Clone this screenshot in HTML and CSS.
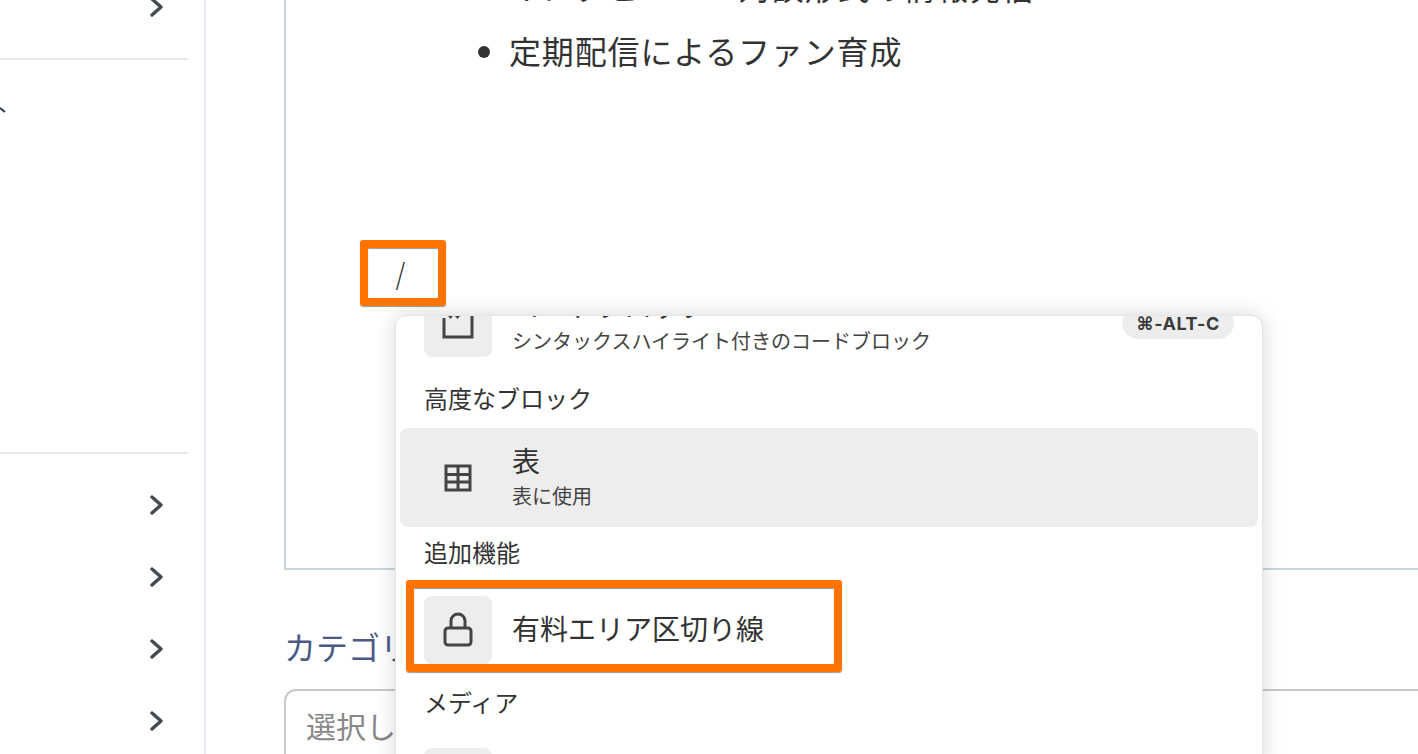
FILE: index.html
```html
<!DOCTYPE html>
<html lang="ja">
<head>
    <meta charset="UTF-8">
    <title>記事エディタ</title>
    <link rel="stylesheet" href="styles.css">
</head>
<body>
    <aside class="sidebar">
        <div class="side-row side-row-first">
            <svg class="chevron" viewBox="0 0 14 20"><path d="M2 2l9 8-9 8"/></svg>
        </div>
        <div class="side-section">
            <svg class="side-mark" viewBox="0 0 6 6"><path d="M0 1l5 4"/></svg>
        </div>
        <div class="side-row">
            <svg class="chevron" viewBox="0 0 14 20"><path d="M2 2l9 8-9 8"/></svg>
        </div>
        <div class="side-row">
            <svg class="chevron" viewBox="0 0 14 20"><path d="M2 2l9 8-9 8"/></svg>
        </div>
        <div class="side-row">
            <svg class="chevron" viewBox="0 0 14 20"><path d="M2 2l9 8-9 8"/></svg>
        </div>
        <div class="side-row">
            <svg class="chevron" viewBox="0 0 14 20"><path d="M2 2l9 8-9 8"/></svg>
        </div>
    </aside>

    <main class="main">
        <div class="editor">
            <ul class="editor-list">
                <li>インタビュー・対談形式の情報発信</li>
                <li>定期配信によるファン育成</li>
            </ul>
            <p class="editor-line">/</p>
        </div>
        <div class="field-label">カテゴリー</div>
        <div class="select">選択してください</div>
    </main>

    <div class="block-menu">
        <div class="menu-scroll">
            <div class="menu-item menu-item-code">
                <span class="menu-icon">
                    <svg viewBox="0 0 32 40"><path d="M2 15v19h28V8"/><path class="icon-fill" d="M6 13h5l-2.500 3zM13 13h5l-2.500 3z"/></svg>
                </span>
                <div class="menu-text">
                    <div class="menu-title">コードブロック</div>
                    <div class="menu-sub">シンタックスハイライト付きのコードブロック</div>
                </div>
                <span class="shortcut">⌘-ALT-C</span>
            </div>
            <div class="menu-heading menu-heading-tight">高度なブロック</div>
            <div class="menu-item menu-item-active">
                <span class="menu-icon">
                    <svg viewBox="0 0 28 28"><path d="M2 2h24v24H2zM2 10.500h24M2 18h24M14 2v24"/></svg>
                </span>
                <div class="menu-text">
                    <div class="menu-title">表</div>
                    <div class="menu-sub">表に使用</div>
                </div>
            </div>
            <div class="menu-heading">追加機能</div>
            <div class="menu-item menu-item-single">
                <span class="menu-icon">
                    <svg class="icon-lock" viewBox="0 0 30 36"><path d="M8 16V9a7 7 0 0 1 14 0v7M5 16h20a3 3 0 0 1 3 3v11a3 3 0 0 1-3 3H5a3 3 0 0 1-3-3V19a3 3 0 0 1 3-3z"/></svg>
                </span>
                <div class="menu-text">
                    <div class="menu-title">有料エリア区切り線</div>
                </div>
            </div>
            <div class="menu-heading menu-heading-tight">メディア</div>
            <div class="menu-item menu-item-single">
                <span class="menu-icon"></span>
                <div class="menu-text">
                    <div class="menu-title">画像</div>
                </div>
            </div>
        </div>
    </div>

    <div class="callout callout-slash"></div>
    <div class="callout callout-paid"></div>
</body>
</html>
```

FILE: styles.css
```css
* {
    margin: 0;
    padding: 0;
    box-sizing: border-box;
}

body {
    font-family: "Noto Sans CJK JP", "Noto Sans", sans-serif;
    background: white;
    color: #333;
    width: 1418px;
    height: 754px;
    display: flex;
    overflow: hidden;
    position: relative;
}

/* サイドバー */
.sidebar {
    width: 206px;
    flex-shrink: 0;
    border-right: 2px solid #e2e8f0;
    padding-right: 16px;
}

.side-row {
    height: 72px;
    display: flex;
    align-items: center;
    justify-content: flex-end;
    padding-right: 24px;
}

.side-row-first {
    margin-top: -29px;
    margin-bottom: 15px;
}

.side-section {
    height: 396px;
    margin-bottom: 15px;
    border-top: 2px solid #e2e8f0;
    border-bottom: 2px solid #e2e8f0;
    padding-top: 47px;
}

.side-mark {
    display: block;
    width: 6px;
    height: 6px;
    fill: none;
    stroke: #2d3748;
    stroke-width: 2;
}

.chevron {
    width: 14px;
    height: 20px;
    fill: none;
    stroke: #434a54;
    stroke-width: 3.4;
    stroke-linecap: round;
    stroke-linejoin: round;
}

/* エディタ */
.main {
    flex: 1;
    min-width: 0;
    padding-left: 78px;
}

.editor {
    height: 570px;
    border-left: 2px solid #cbd5e0;
    border-bottom: 2px solid #cbd5e0;
    overflow: hidden;
}

.editor-list {
    margin-top: -46px;
    padding-left: 223px;
    font-size: 32px;
    letter-spacing: 0.85px;
    line-height: 64px;
}

.editor-line {
    margin-top: 161px;
    padding-left: 109px;
    font-family: Inter, sans-serif;
    font-size: 32px;
    font-weight: 200;
    line-height: 64px;
}

.field-label {
    margin-top: 52px;
    font-size: 32px;
    line-height: 48px;
    color: #4a5a85;
    white-space: nowrap;
}

.select {
    margin-top: 19px;
    height: 120px;
    border: 2px solid #c8c8c8;
    border-right: none;
    border-radius: 12px 0 0 12px;
    padding: 11px 0 0 20px;
    font-size: 30px;
    line-height: 46px;
    color: #888;
}

/* ブロック選択メニュー */
.block-menu {
    position: absolute;
    left: 395px;
    top: 315px;
    width: 868px;
    height: 460px;
    background: white;
    border: 1px solid #e4e4e4;
    border-radius: 12px;
    box-shadow: 0 0 20px rgba(0, 0, 0, 0.16);
    overflow: hidden;
}

.menu-scroll {
    margin-top: -43px;
    padding: 0 4px;
}

.menu-item {
    display: flex;
    align-items: center;
    gap: 20px;
    padding: 16px 24px 15px;
    border-radius: 8px;
}

.menu-item-code {
    margin-bottom: 3px;
}

.menu-item-active {
    background: #ededed;
}

.menu-icon {
    width: 68px;
    height: 68px;
    flex-shrink: 0;
    display: flex;
    align-items: center;
    justify-content: center;
    background: #ededed;
    border-radius: 8px;
}

.menu-icon svg {
    width: 28px;
    height: 28px;
    fill: none;
    stroke: #444;
    stroke-width: 3;
}

.menu-icon .icon-lock {
    width: 30px;
    height: 36px;
}

.menu-item-code .menu-icon svg {
    width: 32px;
    height: 40px;
}

.menu-icon .icon-fill {
    fill: #444;
    stroke: none;
}

.menu-text {
    flex: 1;
}

.menu-title {
    font-size: 28px;
    line-height: 32px;
    color: #333;
}

.menu-item-single .menu-title {
    margin-bottom: 4px;
}

.menu-sub {
    font-size: 20px;
    line-height: 40px;
    margin-bottom: -4px;
    color: #444;
}

.menu-heading {
    height: 53px;
    padding: 0 24px 4px;
    display: flex;
    align-items: center;
    font-size: 24px;
    color: #333;
}

.menu-heading-tight {
    padding-bottom: 9px;
}

.shortcut {
    height: 32px;
    width: 112px;
    flex-shrink: 0;
    display: flex;
    align-items: center;
    justify-content: center;
    background: #ededed;
    border-radius: 16px;
    font-family: Inter, sans-serif;
    font-size: 18px;
    font-weight: 700;
    letter-spacing: 0.5px;
    color: #3c3c3c;
}

/* 注釈の枠 */
.callout {
    position: absolute;
    border: 8px solid #ff7300;
    border-radius: 3px;
    box-shadow: 0 1px 1px rgba(0, 0, 0, 0.4), inset 0 1px 1px rgba(0, 0, 0, 0.4);
}

.callout-slash {
    left: 360px;
    top: 240px;
    width: 86px;
    height: 66px;
}

.callout-paid {
    left: 406px;
    top: 580px;
    width: 436px;
    height: 92px;
}
```
